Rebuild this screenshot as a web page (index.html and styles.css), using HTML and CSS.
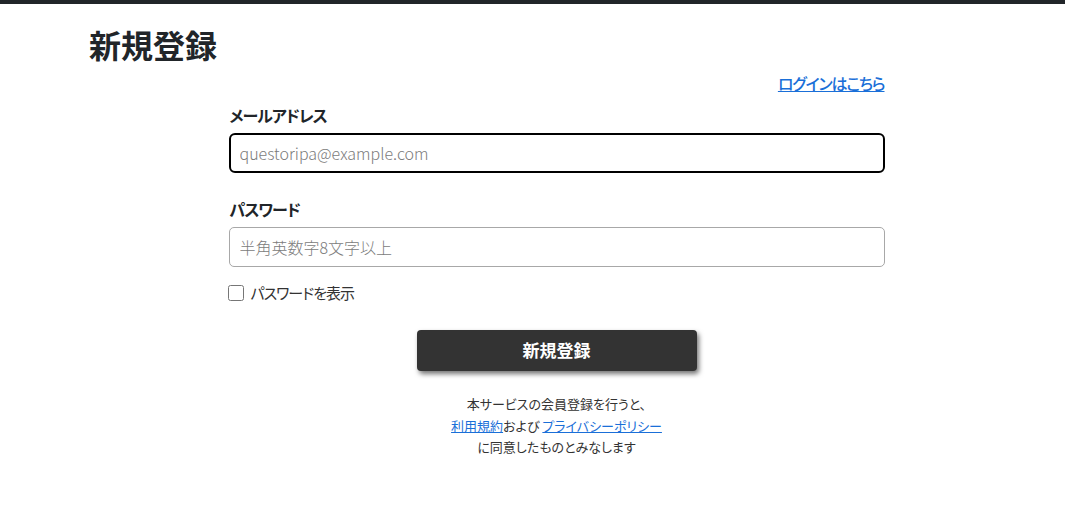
FILE: index.html
```html
<!DOCTYPE html>
<html lang="ja">
<head>
  <meta charset="UTF-8" />
  <meta name="viewport" content="width=device-width, initial-scale=1.0"/>
  <title>新規登録</title>
  <link rel="stylesheet" href="styles.css">
</head>
<body>
  <div class="topbar"></div>
  <main class="page">
    <h1 class="title">新規登録</h1>
    <form class="signup">
      <div class="login-link">
        <a href="#">ログインはこちら</a>
      </div>

      <div class="field">
        <label for="email">メールアドレス</label>
        <input type="email" id="email" class="input focused" placeholder="questoripa@example.com" />
      </div>

      <div class="field">
        <label for="password">パスワード</label>
        <input type="password" id="password" class="input" placeholder="半角英数字8文字以上" />
      </div>

      <label class="show-pass">
        <input type="checkbox" />
        <span>パスワードを表示</span>
      </label>

      <div class="actions">
        <button type="button" class="submit">新規登録</button>
      </div>

      <p class="terms">
        本サービスの会員登録を行うと、<br>
        <a href="#">利用規約</a>および <a href="#">プライバシーポリシー</a><br>
        に同意したものとみなします
      </p>
    </form>
  </main>
</body>
</html>
```

FILE: styles.css
```css
* {
  box-sizing: border-box;
  font-family: 'Noto Sans CJK JP', 'Noto Sans', sans-serif;
  font-feature-settings: "palt";
}

body {
  margin: 0;
  background-color: #ffffff;
  color: #212529;
}

.topbar {
  height: 4px;
  background-color: #212529;
}

.page {
  padding: 0 41px 0 89px;
}

.title {
  margin: 21px 0 0;
  font-size: 32px;
  line-height: 1.2;
  font-weight: 700;
}

.signup {
  max-width: 656px;
  margin: 0 auto;
}

.login-link {
  text-align: right;
  margin-top: 8px;
  font-size: 16px;
  line-height: 24px;
  font-weight: 500;
  letter-spacing: -1.2px;
}

.login-link a,
.terms a {
  color: #1a6fd8;
}

.field {
  margin-top: 8px;
}

.field + .field {
  margin-top: 24px;
}

.field label {
  display: block;
  font-size: 16px;
  line-height: 24px;
  font-weight: 700;
  letter-spacing: -1px;
  padding-left: 1px;
  margin-bottom: 6px;
}

.input {
  display: block;
  width: 100%;
  height: 40px;
  padding: 6px 10px;
  font-size: 16px;
  font-weight: 300;
  color: #212529;
  border: 1px solid #a8a8a8;
  border-radius: 5px;
  outline: none;
}

.input::placeholder {
  color: #7b7b7b;
}

.input.focused {
  border: 2px solid #000000;
  border-radius: 6px;
  padding-left: 9px;
}

.show-pass {
  display: flex;
  align-items: center;
  gap: 7px;
  margin-top: 15px;
  font-size: 15px;
  line-height: 22px;
  letter-spacing: -1px;
  color: #333333;
}

.show-pass input {
  margin: 0 0 0 -1px;
  width: 16px;
  height: 16px;
}

.actions {
  display: flex;
  justify-content: center;
  margin-top: 26px;
}

.submit {
  width: 280px;
  height: 41px;
  padding: 0 0 3px;
  border: none;
  border-radius: 4px;
  background-color: #333333;
  color: #ffffff;
  font-size: 17px;
  font-weight: 700;
  box-shadow: 2px 3px 5px rgba(0, 0, 0, 0.55);
  cursor: pointer;
}

.terms {
  margin: 22px 0 0;
  text-align: center;
  font-size: 13px;
  line-height: 21.5px;
  color: #333333;
}
```
